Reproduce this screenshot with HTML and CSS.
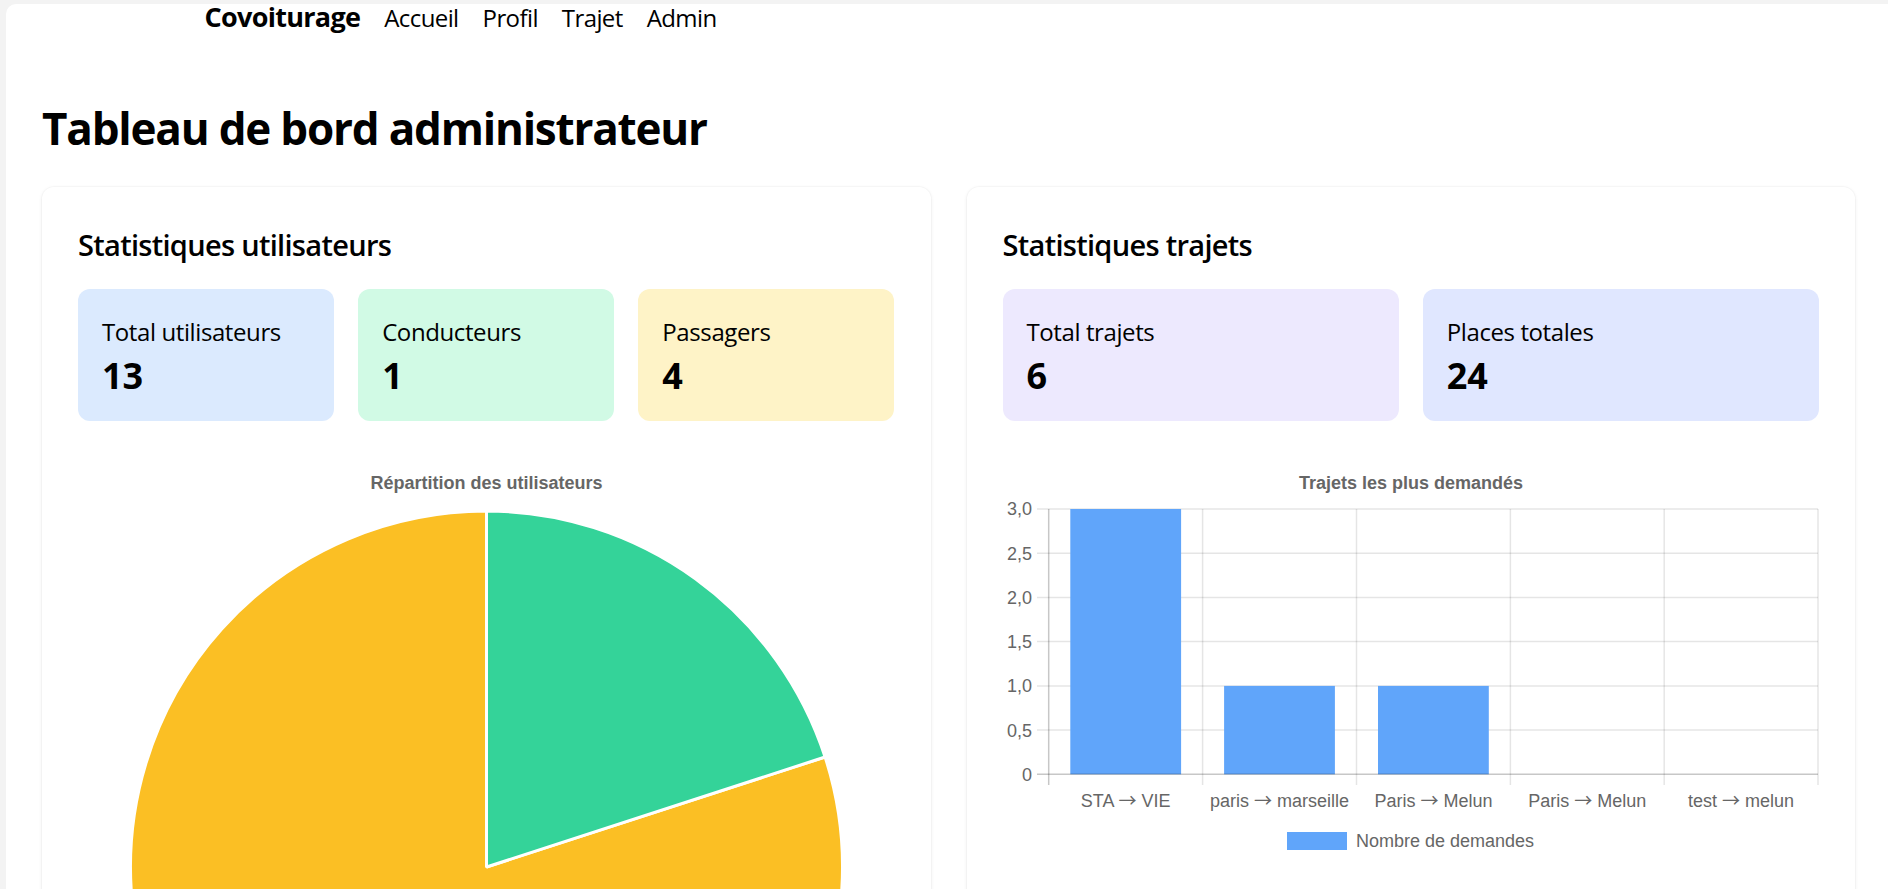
FILE: index.html
```html
<!DOCTYPE html>
<html lang="fr">
<head>
<meta charset="utf-8">
<title>Tableau de bord administrateur</title>
<link rel="stylesheet" href="styles.css">
</head>
<body>
<div class="window">
  <nav class="nav">
    <div class="nav-inner">
      <a class="brand" href="#">Covoiturage</a>
      <a class="nav-link" href="#">Accueil</a>
      <a class="nav-link" href="#">Profil</a>
      <a class="nav-link" href="#">Trajet</a>
      <a class="nav-link" href="#">Admin</a>
    </div>
  </nav>
  <main class="main">
    <h1 class="page-title">Tableau de bord administrateur</h1>
    <div class="grid">
      <section class="card">
        <h2 class="card-title">Statistiques utilisateurs</h2>
        <div class="stats stats-3">
          <div class="stat stat-blue">
            <div class="stat-label">Total utilisateurs</div>
            <div class="stat-value">13</div>
          </div>
          <div class="stat stat-green">
            <div class="stat-label">Conducteurs</div>
            <div class="stat-value">1</div>
          </div>
          <div class="stat stat-yellow">
            <div class="stat-label">Passagers</div>
            <div class="stat-value">4</div>
          </div>
        </div>
        <div class="chart">
          <svg class="chart-svg" width="816" height="780" viewBox="0 0 816 780">
            <text class="chart-title" x="408.5" y="32.3" text-anchor="middle">Répartition des utilisateurs</text>
            <path d="M408.5 410 L747.08 300 A356 356 0 1 1 408.5 54 Z" fill="#fbbf24" stroke="#fff" stroke-width="3" stroke-linejoin="bevel"/>
            <path d="M408.5 410 L408.5 54 A356 356 0 0 1 747.08 300 Z" fill="#34d399" stroke="#fff" stroke-width="3" stroke-linejoin="bevel"/>
          </svg>
        </div>
      </section>
      <section class="card">
        <h2 class="card-title">Statistiques trajets</h2>
        <div class="stats stats-2">
          <div class="stat stat-purple">
            <div class="stat-label">Total trajets</div>
            <div class="stat-value">6</div>
          </div>
          <div class="stat stat-indigo">
            <div class="stat-label">Places totales</div>
            <div class="stat-value">24</div>
          </div>
        </div>
        <div class="chart">
          <svg class="chart-svg" width="816" height="410" viewBox="0 0 816 410">
            <text class="chart-title" x="408" y="32.3" text-anchor="middle">Trajets les plus demandés</text>
            <g class="grid-h">
              <line x1="34" y1="52" x2="815" y2="52"/>
              <line x1="34" y1="96.2" x2="815" y2="96.2"/>
              <line x1="34" y1="140.4" x2="815" y2="140.4"/>
              <line x1="34" y1="184.6" x2="815" y2="184.6"/>
              <line x1="34" y1="228.9" x2="815" y2="228.9"/>
              <line x1="34" y1="273.1" x2="815" y2="273.1"/>
            </g>
            <g class="grid-v">
              <line x1="199.6" y1="52" x2="199.6" y2="328"/>
              <line x1="353.5" y1="52" x2="353.5" y2="328"/>
              <line x1="507.4" y1="52" x2="507.4" y2="328"/>
              <line x1="661.2" y1="52" x2="661.2" y2="328"/>
              <line x1="815" y1="52" x2="815" y2="328"/>
            </g>
            <g class="bars">
              <rect x="67.3" y="52" width="110.8" height="265.3"/>
              <rect x="221.1" y="228.9" width="110.8" height="88.4"/>
              <rect x="375" y="228.9" width="110.8" height="88.4"/>
            </g>
            <g class="axis">
              <line x1="34" y1="317.3" x2="815" y2="317.3"/>
              <line x1="45.7" y1="52" x2="45.7" y2="328"/>
            </g>
            <g class="ticks-y" text-anchor="end">
              <text x="29" y="58.4">3,0</text>
              <text x="29" y="102.6">2,5</text>
              <text x="29" y="146.8">2,0</text>
              <text x="29" y="191">1,5</text>
              <text x="29" y="235.3">1,0</text>
              <text x="29" y="279.5">0,5</text>
              <text x="29" y="323.7">0</text>
            </g>
            <g class="ticks-x" text-anchor="middle">
              <text x="122.6" y="349.5">STA <tspan class="arrow">→</tspan> VIE</text>
              <text x="276.5" y="349.5">paris <tspan class="arrow">→</tspan> marseille</text>
              <text x="430.4" y="349.5">Paris <tspan class="arrow">→</tspan> Melun</text>
              <text x="584.3" y="349.5">Paris <tspan class="arrow">→</tspan> Melun</text>
              <text x="738.1" y="349.5">test <tspan class="arrow">→</tspan> melun</text>
            </g>
            <rect class="legend-box" x="284" y="375" width="60" height="18"/>
            <text class="legend-text" x="353" y="389.5">Nombre de demandes</text>
          </svg>
        </div>
      </section>
    </div>
  </main>
</div>
</body>
</html>
```

FILE: styles.css
```css
html, body {
  margin: 0;
  height: 100%;
  overflow: hidden;
}

body {
  background: #f3f3f3;
  font-family: "Segoe UI", "Open Sans", sans-serif;
  color: #000;
}

.window {
  margin: 4px -3px 0 6px;
  min-height: calc(100vh - 4px);
  background: #fff;
  border-top-left-radius: 10px;
}

.nav-inner {
  box-sizing: border-box;
  max-width: 1536px;
  margin: 0 auto;
  padding: 0 24px;
  display: flex;
  align-items: baseline;
  gap: 24px;
  line-height: 25px;
}

.nav a {
  color: #000;
  text-decoration: none;
}

.brand {
  font-size: 27px;
  font-weight: 700;
  letter-spacing: -0.7px;
}

.nav-link {
  font-size: 24px;
  letter-spacing: -0.6px;
}

.main {
  padding: 0 36px;
}

.page-title {
  font-size: 44px;
  line-height: 54px;
  font-weight: 700;
  letter-spacing: -1.2px;
  margin: 71px 0 32px;
}

.grid {
  display: grid;
  grid-template-columns: 1fr 1fr;
  gap: 36px;
  align-items: start;
}

.card {
  background: #fff;
  border-radius: 12px;
  padding: 36px;
  box-shadow: 0 1px 4px rgba(0, 0, 0, 0.07), 0 0 0 1px rgba(0, 0, 0, 0.02);
}

.card-title {
  font-size: 29px;
  line-height: 42px;
  font-weight: 600;
  letter-spacing: -0.7px;
  padding-top: 1px;
  margin: 0 0 23px;
}

.stats {
  display: grid;
  gap: 24px;
}

.stats-3 {
  grid-template-columns: repeat(3, 1fr);
}

.stats-2 {
  grid-template-columns: repeat(2, 1fr);
}

.stat {
  border-radius: 12px;
  padding: 25px 24px 21.5px;
}

.stat-blue { background: #dbeafe; }
.stat-green { background: #d1fae5; }
.stat-yellow { background: #fef3c7; }
.stat-purple { background: #ede9fe; }
.stat-indigo { background: #e0e7ff; }

.stat-label {
  font-size: 24px;
  line-height: 36px;
  font-weight: 500;
  letter-spacing: -0.4px;
}

.stat-value {
  font-size: 36px;
  line-height: 48px;
  font-weight: 700;
  margin-top: 1.5px;
}

.chart {
  margin-top: 36px;
}

.chart-svg {
  display: block;
  overflow: visible;
  font-family: "Liberation Sans", Arial, sans-serif;
  font-size: 18px;
  fill: #666;
}

.chart-title {
  font-weight: 700;
  fill: #666;
}

.arrow {
  font-family: "Noto Sans CJK SC", "Liberation Sans", sans-serif;
}

.grid-h line,
.grid-v line {
  stroke: rgba(0, 0, 0, 0.1);
  stroke-width: 1.5;
}

.axis line {
  stroke: rgba(0, 0, 0, 0.22);
  stroke-width: 1.5;
}

.bars rect,
.legend-box {
  fill: #60a5fa;
}

.ticks-y text,
.ticks-x text,
.legend-text {
  fill: #666;
}
```
